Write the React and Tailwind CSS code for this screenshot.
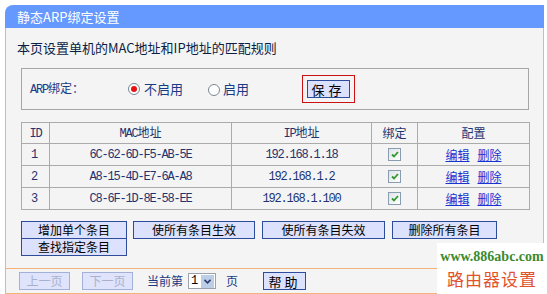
import React from "react";

const cjk = "font-['Noto_Sans_CJK_SC',sans-serif]";
const mono = "font-['Liberation_Mono','Noto_Sans_CJK_SC',monospace] tracking-[-1.2px]";

function Radio({ on }) {
  return (
    <span className="inline-flex h-[12px] w-[12px] items-center justify-center rounded-full border border-[#7b8793] bg-white">
      {on && <span className="h-[6px] w-[6px] rounded-full bg-[#e81010]" />}
    </span>
  );
}

function Check() {
  return (
    <span className="inline-flex h-[13px] w-[13px] items-center justify-center border border-[#8a9cb0] bg-gradient-to-br from-[#dfe3e8] to-[#ffffff]">
      <svg width="8" height="7" viewBox="0 0 8 7">
        <path d="M1 3.5 L3 5.5 L7 1" fill="none" stroke="#2e9a2e" strokeWidth="1.8" />
      </svg>
    </span>
  );
}

function Btn({ children, w, className = "" }) {
  return (
    <div
      className={`flex h-[18px] items-center justify-center border border-[#2d4c9a] bg-[#dce1fd] text-[12px] leading-none text-black ${w} ${className}`}
    >
      {children}
    </div>
  );
}

function DisBtn({ children }) {
  return (
    <div className="flex h-[18px] w-[51px] items-center justify-center border border-[#a3b0d8] bg-[#dfe3fb] text-[12px] leading-none text-[#a9b2cc]">
      {children}
    </div>
  );
}

const rows = [
  ["1", "6C-62-6D-F5-AB-5E", "192.168.1.18"],
  ["2", "A8-15-4D-E7-6A-A8", "192.168.1.2"],
  ["3", "C8-6F-1D-8E-58-EE", "192.168.1.100"],
];

export default function App() {
  return (
    <div className={`relative h-[294px] w-[547px] overflow-hidden bg-white ${cjk}`}>
      <div className="ml-[5px] mt-[5px] w-[539px]">
        {/* header */}
        <div className="flex h-[23px] items-center rounded-tl-[8px] bg-[#6699ff] pl-[12px] text-[13px] text-white">
          静态ARP绑定设置
        </div>
        {/* body */}
        <div className="border-x border-[#f3b27a] bg-[#f4f4f4] pb-[12px] pl-[15px] pr-[13px] pt-[10px]">
          <div className="-ml-[4px] flex h-[20px] items-center text-[13px] text-[#0d1e44]">
            本页设置单机的MAC地址和IP地址的匹配规则
          </div>
          {/* fieldset */}
          <div className="mt-[10px] flex h-[42px] w-[508px] items-center border border-[#a6a6a6] pl-[8px]">
            <span className="w-[98px] text-[12px] text-[#1b3a84]">
              <span className={mono}>ARP</span>绑定：
            </span>
            <Radio on />
            <span className="ml-[4px] text-[13px] text-[#1b3a84]">不启用</span>
            <span className="ml-[25px]">
              <Radio />
            </span>
            <span className="ml-[3px] text-[13px] text-[#1b3a84]">启用</span>
            <div className="ml-[53px] border border-[#cc1111] p-[4px]">
              <div className="flex h-[18px] w-[43px] items-center justify-center border border-[#2d4c9a] bg-[#dce1fd] text-[13px] leading-none tracking-[4px] text-black">
                保存
              </div>
            </div>
          </div>
          {/* table */}
          <table className="mt-[12px] w-[509px] border-collapse text-[12px] text-[#1d3470]">
            <thead>
              <tr className="h-[20px]">
                <th className="w-[28px] border border-[#ababab] font-normal">
                  <span className={mono}>ID</span>
                </th>
                <th className="w-[182px] border border-[#ababab] font-normal">
                  <span className={mono}>MAC</span>地址
                </th>
                <th className="w-[140px] border border-[#ababab] font-normal">
                  <span className={mono}>IP</span>地址
                </th>
                <th className="w-[46px] border border-[#ababab] font-normal">绑定</th>
                <th className="border border-[#ababab] font-normal">配置</th>
              </tr>
            </thead>
            <tbody>
              {rows.map((r) => (
                <tr key={r[0]} className="h-[22px]">
                  <td className={`border border-[#ababab] pl-[9px] ${mono}`}>{r[0]}</td>
                  <td className={`border border-[#ababab] text-center ${mono}`}>{r[1]}</td>
                  <td className={`border border-[#ababab] text-center ${mono}`}>{r[2]}</td>
                  <td className="border border-[#ababab]">
                    <div className="flex items-center justify-center">
                      <Check />
                    </div>
                  </td>
                  <td className="border border-[#ababab]">
                    <div className="flex items-center justify-center gap-[8px] text-[12px] text-[#1a32d0]">
                      <span className="underline">编辑</span>
                      <span className="underline">删除</span>
                    </div>
                  </td>
                </tr>
              ))}
            </tbody>
          </table>
          {/* buttons */}
          <div className="mt-[11px] flex">
            <Btn w="w-[106px]">增加单个条目</Btn>
            <Btn w="w-[122px]" className="ml-[6px]">使所有条目生效</Btn>
            <Btn w="w-[123px]" className="ml-[7px]">使所有条目失效</Btn>
            <Btn w="w-[105px]" className="ml-[7px]">删除所有条目</Btn>
          </div>
          <Btn w="w-[106px]" className="-mt-px">查找指定条目</Btn>
        </div>
        {/* pagination */}
        <div className="flex h-[26px] items-center border border-[#f3b27a] bg-[#f4f4f4] pl-[13px]">
          <DisBtn>上一页</DisBtn>
          <span className="ml-[12px]">
            <DisBtn>下一页</DisBtn>
          </span>
          <span className="ml-[14px] text-[12px] text-[#1b3a84]">当前第</span>
          <div className="ml-[5px] flex h-[16px] w-[28px] items-center border border-[#9aa3ad] bg-white">
            <span className={`pl-[2px] text-[12px] text-black ${mono}`}>1</span>
            <div className="ml-auto mr-px flex h-[13px] w-[13px] items-center justify-center bg-[#bccde6]">
              <svg width="7" height="5" viewBox="0 0 7 5">
                <path d="M0.5 0.8 L3.5 3.8 L6.5 0.8" fill="none" stroke="#2a3a6a" strokeWidth="1.6" />
              </svg>
            </div>
          </div>
          <span className="ml-[10px] text-[12px] text-[#1b3a84]">页</span>
          <Btn w="w-[43px]" className="ml-[25px] tracking-[3px] text-[13px]">帮助</Btn>
        </div>
      </div>
      {/* watermark */}
      <div className="absolute left-[437px] top-[243px] flex h-[51px] w-[110px] flex-col items-center bg-white pt-[5px]">
        <span className="font-['Liberation_Serif',serif] text-[14px] font-bold leading-[18px] text-[#3b8a2e]">
          www.886abc.com
        </span>
        <span className="mt-[2px] text-[17px] leading-[22px] tracking-[1px] text-[#e2522c]">路由器设置</span>
      </div>
    </div>
  );
}
